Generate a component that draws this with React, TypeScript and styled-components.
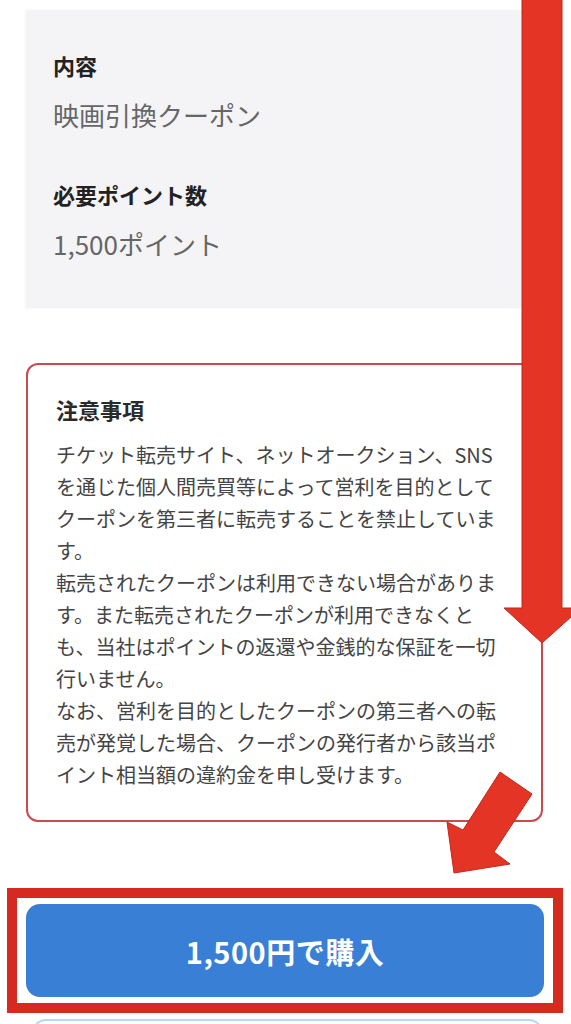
import styled, { createGlobalStyle } from 'styled-components';

const GlobalStyle = createGlobalStyle`
  html, body {
    margin: 0;
    padding: 0;
    background: #ffffff;
  }
  body {
    font-family: "Noto Sans CJK JP", "Noto Sans", sans-serif;
    color: #333;
    overflow: hidden;
  }
`;

export default function App() {
  return (
    <>
      <GlobalStyle />
      <Page>
        <InfoCard>
          <Label>内容</Label>
          <Value>映画引換クーポン</Value>
          <Label $spaced>必要ポイント数</Label>
          <Value>1,500ポイント</Value>
        </InfoCard>

        <NoticeBox>
          <NoticeTitle>注意事項</NoticeTitle>
          <NoticeText>
            チケット転売サイト、ネットオークション、SNSを通じた個人間売買等によって営利を目的としてクーポンを第三者に転売することを禁止しています。
          </NoticeText>
          <NoticeText>
            転売されたクーポンは利用できない場合があります。また転売されたクーポンが利用できなくとも、当社はポイントの返還や金銭的な保証を一切行いません。
          </NoticeText>
          <NoticeText>
            なお、営利を目的としたクーポンの第三者への転売が発覚した場合、クーポンの発行者から該当ポイント相当額の違約金を申し受けます。
          </NoticeText>
        </NoticeBox>

        <Highlight>
          <BuyButton>1,500円で購入</BuyButton>
        </Highlight>
        <NextButton />

        <Annotations viewBox="0 0 571 1024" width="571" height="1024">
          <polygon
            points="522,-5 562,-5 562,608 581,608 542,643 504,608 522,608"
            fill="#e33426"
            stroke="#c4271c"
            strokeWidth="1"
          />
          <polygon
            points="500,772 532,794 494,852 510,864 454,873 447,822 463,830"
            fill="#e33426"
            stroke="#c4271c"
            strokeWidth="1"
          />
        </Annotations>
      </Page>
    </>
  );
}

const Page = styled.main`
  position: relative;
  width: 571px;
  height: 1024px;
  box-sizing: border-box;
  padding: 10px 28px 0 26px;
  overflow: hidden;
`;

const InfoCard = styled.section`
  display: flex;
  flex-direction: column;
  background: #f4f4f6;
  padding: 40px 27px 46px;
  box-shadow: -1px 0 3px rgba(0, 0, 0, 0.04);
`;

const Label = styled.div<{ $spaced?: boolean }>`
  font-size: 22px;
  font-weight: 700;
  line-height: 30px;
  color: #222;
  margin-top: ${p => (p.$spaced ? '46px' : '0')};
`;

const Value = styled.div`
  font-size: 26px;
  line-height: 36px;
  color: #666;
  margin-top: 17px;
`;

const NoticeBox = styled.section`
  margin-top: 55px;
  border: 2px solid #cc4a4e;
  border-radius: 12px;
  background: #fff;
  padding: 29px 35px 29px 28px;
`;

const NoticeTitle = styled.h2`
  margin: 0 0 15px;
  font-size: 22px;
  font-weight: 700;
  line-height: 30px;
  color: #2a2a2a;
`;

const NoticeText = styled.p`
  margin: 0;
  font-size: 20px;
  line-height: 32px;
  color: #444;
`;

const Highlight = styled.div`
  margin: 66px -20px 0 -19px;
  border: 10px solid #d62a20;
  padding: 6px 9px;
  background: #fff;
`;

const BuyButton = styled.button`
  display: flex;
  align-items: center;
  justify-content: center;
  width: 100%;
  height: 93px;
  border: none;
  border-radius: 14px;
  background: #3a7fd6;
  color: #fff;
  font-family: "Noto Sans CJK JP", "Noto Sans", sans-serif;
  font-size: 29px;
  font-weight: 700;
  letter-spacing: 0.5px;
`;

const NextButton = styled.div`
  margin: 6px 0 0 6px;
  height: 60px;
  border: 2px solid #bcd7f4;
  border-radius: 14px;
`;

const Annotations = styled.svg`
  position: absolute;
  top: 0;
  left: 0;
  pointer-events: none;
`;
